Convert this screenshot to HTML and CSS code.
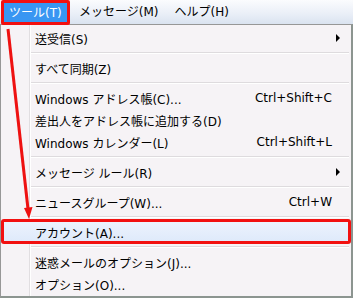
FILE: index.html
```html
<!doctype html>
<html>
 <head>
	<meta charset="UTF-8">
	<title>ツール メニュー</title>
	<link rel="stylesheet" href="styles.css">
 </head>
<body>

	<div class="menubar">
		<div class="bar-item active">ツール(T)</div>
		<div class="bar-item">メッセージ(M)</div>
		<div class="bar-item">ヘルプ(H)</div>
	</div>

	<div class="menu">
		<div class="item"><span class="label">送受信(S)</span><span class="sub"></span></div>
		<div class="sep"></div>
		<div class="item"><span class="label">すべて同期(Z)</span></div>
		<div class="sep"></div>
		<div class="item"><span class="label">Windows アドレス帳(C)...</span><span class="key">Ctrl+Shift+C</span></div>
		<div class="item"><span class="label">差出人をアドレス帳に追加する(D)</span></div>
		<div class="item"><span class="label">Windows カレンダー(L)</span><span class="key">Ctrl+Shift+L</span></div>
		<div class="sep"></div>
		<div class="item"><span class="label">メッセージ ルール(R)</span><span class="sub"></span></div>
		<div class="sep"></div>
		<div class="item"><span class="label">ニュースグループ(W)...</span><span class="key">Ctrl+W</span></div>
		<div class="sep"></div>
		<div class="item selected"><span class="label">アカウント(A)...</span></div>
		<div class="sep"></div>
		<div class="item"><span class="label">迷惑メールのオプション(J)...</span></div>
		<div class="item"><span class="label">オプション(O)...</span></div>
	</div>

	<!-- red guide arrow -->
	<svg class="arrow" width="40" height="230" viewBox="0 0 40 230">
		<line x1="8" y1="29" x2="28" y2="209" stroke="#ee1111" stroke-width="3"/>
		<polygon points="29,219 32.5,207 24,208" fill="#ee1111"/>
	</svg>

</body>
</html>
```

FILE: styles.css
```css
* {
	box-sizing: border-box;
}

body {
	margin: 0;
	padding: 0;
	width: 353px;
	height: 298px;
	overflow: hidden;
	position: relative;
	font-family: "DejaVu Sans", "Noto Sans CJK JP", sans-serif;
	font-size: 12px;
	color: #000;
	background: #fff;
}

.menubar {
	display: flex;
	height: 24px;
	background: linear-gradient(#fbfcfe, #e9eef7 60%, #dae3f0);
}

.bar-item {
	padding: 0 8px;
	line-height: 24px;
	white-space: nowrap;
}

.bar-item.active {
	position: relative;
	z-index: 2;
	margin-left: 1px;
	margin-right: 1px;
	width: 69px;
	height: 25px;
	padding: 0 5px;
	line-height: 20px;
	color: #fff;
	background: #3996f2;
	border: 3px solid #f21010;
	border-radius: 2px;
}

.menu {
	border-top: 1px solid #979797;
	border-left: 1px solid #979797;
	border-right: 2px solid #8c9590;
	border-bottom: 2px solid #8c9590;
	padding: 2px 0 1px;
	background: linear-gradient(to right, #f6f3f6 28px, #e1dee1 28px, #e1dee1 29px, #fff 29px, #fff 30px, #f6f3f6 30px);
}

.item {
	position: relative;
	display: flex;
	align-items: center;
	height: 22px;
	padding-left: 34px;
	padding-right: 11px;
	white-space: nowrap;
}

.item .label {
	flex: 1;
}

.item .key {
	margin-right: 8px;
}

.item .sub {
	width: 0;
	height: 0;
	border-top: 4px solid transparent;
	border-bottom: 4px solid transparent;
	border-left: 4px solid #000;
}

.item.selected {
	background: linear-gradient(#edf3fd, #dde9fa);
}

.item.selected::after {
	content: "";
	position: absolute;
	top: -2px;
	bottom: -1px;
	left: 0;
	right: 0;
	border: 3px solid #f21010;
	border-radius: 3px;
}

.sep {
	height: 8px;
	margin-left: 30px;
	margin-right: 2px;
	padding-top: 3px;
}

.sep::before {
	content: "";
	display: block;
	border-top: 1px solid #dedbde;
	border-bottom: 1px solid #fff;
}

.arrow {
	position: absolute;
	left: 0;
	top: 0;
	z-index: 3;
}
```
